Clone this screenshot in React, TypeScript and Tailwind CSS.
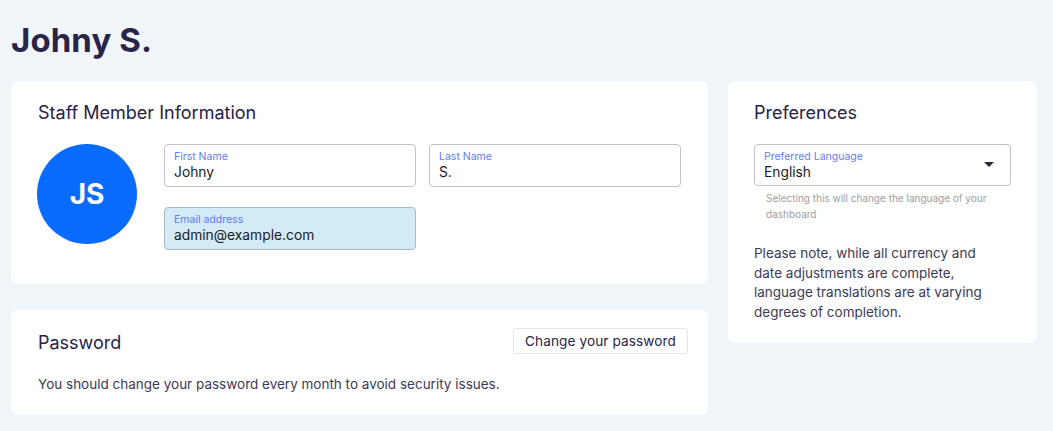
import React from 'react'

function Field({ label, value, filled }: { label: string; value: string; filled?: boolean }) {
  return (
    <div
      className={
        'h-[43px] rounded-[4px] border px-[9px] pt-[5px] ' +
        (filled ? 'bg-[#d3eaf7] border-[#a7b9c6]' : 'bg-white border-[#c4c4c4]')
      }
    >
      <div className="text-[10.5px] leading-[13px] text-[#5f7cf5]">{label}</div>
      <div className="text-[13.8px] leading-[19px] text-[#1b1b1f]">{value}</div>
    </div>
  )
}

export default function App() {
  return (
    <div
      className="min-h-screen bg-[#f0f5f9] px-[11px] pt-[20px] pb-[16px]"
      style={{ fontFamily: 'Inter, "Noto Sans", sans-serif' }}
    >
      <h1 className="text-[33px] leading-[40px] font-bold text-[#28244a] tracking-[0.1px]">Johny S.</h1>

      <div className="mt-[21px] flex gap-[20px]">
        <div className="flex w-[697px] flex-col gap-[26px]">
          <section className="rounded-[8px] bg-white pl-[26px] pr-[27px] pt-[20px] pb-[34px]">
            <h2 className="pl-[1px] text-[18px] leading-[24px] text-[#25224a]">Staff Member Information</h2>
            <div className="mt-[19px] flex gap-[27px]">
              <div className="flex h-[100px] w-[100px] shrink-0 items-center justify-center rounded-full bg-[#0a6cff]">
                <span className="text-[28px] font-bold text-white">JS</span>
              </div>
              <div className="grid w-[517px] grid-cols-2 gap-x-[13px] gap-y-[20px]">
                <Field label="First Name" value="Johny" />
                <Field label="Last Name" value="S." />
                <Field label="Email address" value="admin@example.com" filled />
              </div>
            </div>
          </section>

          <section className="rounded-[8px] bg-white pl-[27px] pr-[20px] pt-[17px] pb-[22px]">
            <div className="flex items-center justify-between">
              <h2 className="mt-[4px] text-[18px] leading-[24px] text-[#25224a]">Password</h2>
              <button className="h-[26px] rounded-[3px] border border-[#e2e4e8] bg-white px-[11px] text-[13.6px] leading-[18px] tracking-[0.1px] text-[#28244a]">
                Change your password
              </button>
            </div>
            <p className="mt-[20px] text-[13.5px] leading-[18px] text-[#3c3a5a]">
              You should change your password every month to avoid security issues.
            </p>
          </section>
        </div>

        <div className="w-[309px] self-start">
          <section className="rounded-[8px] bg-white px-[26px] pt-[20px] pb-[20px]">
            <h2 className="text-[18px] leading-[24px] text-[#25224a]">Preferences</h2>
            <div className="mt-[19px] flex h-[42px] items-center justify-between rounded-[4px] border border-[#c4c4c4] pl-[9px] pr-[16px]">
              <div className="pt-[1px]">
                <div className="text-[10.5px] leading-[13px] text-[#5f7cf5]">Preferred Language</div>
                <div className="text-[13.8px] leading-[18px] text-[#1b1b1f]">English</div>
              </div>
              <svg width="10" height="5" viewBox="0 0 10 5" className="mb-[1px]">
                <path d="M0 0 L10 0 L5 5 Z" fill="#2b2840" />
              </svg>
            </div>
            <p className="mt-[4px] pl-[12px] text-[10px] leading-[16px] text-[#a09ca6]">
              Selecting this will change the language of your dashboard
            </p>
            <p className="mt-[22px] w-[240px] text-[13.5px] leading-[19.7px] text-[#3c3a5a]">
              Please note, while all currency and date adjustments are complete, language translations are at varying degrees of completion.
            </p>
          </section>
        </div>
      </div>
    </div>
  )
}
